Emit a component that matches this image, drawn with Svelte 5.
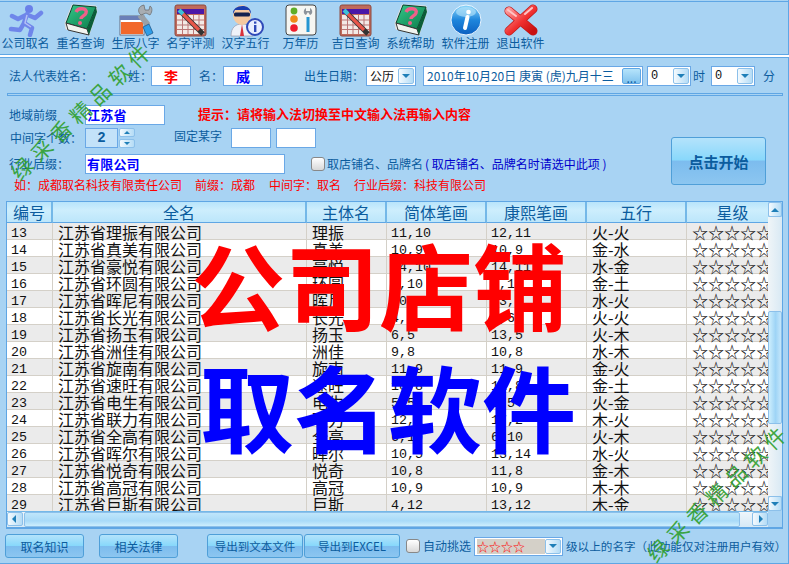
<script>
  const tools = [
    ['runner', '公司取名'], ['book', '重名查询'], ['tool', '生辰八字'], ['cal', '名字评测'], ['man', '汉字五行'],
    ['lights', '万年历'], ['cal', '吉日查询'], ['book', '系统帮助'], ['info', '软件注册'], ['close', '退出软件']
  ];
  const rows = [
    [13,'理振','11,10','12,11','火-火',6],[14,'真美','10,9','10,9','金-水',6],[15,'豪悦','14,10','14,11','水-金',6],
    [16,'环圆','8,10','8,13','金-土',6],[17,'晖尼','10,5','13,5','水-火',6],[18,'长光','4,6','8,6','火-火',5],
    [19,'扬玉','6,5','13,5','火-木',6],[20,'洲佳','9,8','10,8','水-木',6],[21,'旋南','11,9','11,9','金-火',5],
    [22,'速旺','10,8','11,8','金-土',5],[23,'电生','5,5','5,5','火-金',6],[24,'联力','12,2','17,2','木-火',6],
    [25,'全高','6,10','6,10','火-木',6],[26,'晖尔','10,5','13,14','水-火',6],[27,'悦奇','10,8','11,8','金-木',5],
    [28,'高冠','10,9','10,9','木-木',6],[29,'巨斯','4,12','13,12','木-金',6]
  ];
  const heads = ['编号','全名','主体名','简体笔画','康熙笔画','五行','星级'];
</script>

<svg class="defs" width="0" height="0" aria-hidden="true">
  <defs>
    <linearGradient id="gBall" x1="0" y1="0" x2="0" y2="1"><stop offset="0" stop-color="#8fd8fa"/><stop offset=".5" stop-color="#1e86dc"/><stop offset="1" stop-color="#0b5fc0"/></linearGradient>
    <linearGradient id="gX" x1="0" y1="0" x2="1" y2="1"><stop offset="0" stop-color="#ff9a9a"/><stop offset=".55" stop-color="#f03030"/><stop offset="1" stop-color="#c80f0f"/></linearGradient>
    <linearGradient id="gBook" x1="0" y1="0" x2="1" y2="1"><stop offset="0" stop-color="#35c98a"/><stop offset="1" stop-color="#0b7a4a"/></linearGradient>
    <symbol id="runner" viewBox="0 0 36 34">
      <circle cx="21" cy="6" r="4" fill="#6a80e8"/>
      <path d="M19 11 L16 20 L24 25 L22 32 M16 20 L12 27 L3 26 M18 12 L10 16 L4 13 M20 12 L27 15 L33 10" fill="none" stroke="#6f86ea" stroke-width="4.500" stroke-linecap="round" stroke-linejoin="round"/>
      <path d="M19 12 L17 20 L23 24" fill="none" stroke="#b4c0f6" stroke-width="1.500"/>
    </symbol>
    <symbol id="book" viewBox="0 0 36 34">
      <path d="M9 2 L33 3 L34 8 L26 32 L3 26 L2 20 Z" fill="#fff" stroke="#ddd" stroke-width="1"/>
      <path d="M10 2 L33 4 L24 26 L3 20 Z" fill="url(#gBook)" stroke="#0a3f2a" stroke-width="1"/>
      <path d="M3 20 L24 26 L26 32 L5 27 Z" fill="#f2f5f0" stroke="#333" stroke-width="1"/>
      <path d="M24 26 L33 4 L34 9 L26 32 Z" fill="#0a5c38"/>
      <path d="M13 9 C15 4 25 5 23 10 C22 13 18 13 18 16" fill="none" stroke="#f0608a" stroke-width="3.400"/>
      <circle cx="17" cy="20" r="2" fill="#f0608a"/>
    </symbol>
    <symbol id="tool" viewBox="0 0 36 34">
      <rect x="2" y="13" width="24" height="19" fill="#fff" stroke="#556" stroke-width=".8"/>
      <rect x="2" y="13" width="24" height="4" fill="#6a7fb8"/>
      <rect x="3" y="19" width="22" height="12" fill="#f2682a"/>
      <path d="M22 12 L30 22" stroke="#9aa0a6" stroke-width="6"/>
      <path d="M26 2 C20 3 19 9 23 12 L28 10 L32 12 C35 8 34 4 32 3 L31 7 L27 7 Z" fill="#a8adb2" stroke="#666" stroke-width=".7"/>
      <path d="M25 24 L31 21 L35 30 L29 33 Z" fill="#2f9ee8" stroke="#1a4f80" stroke-width=".7"/>
    </symbol>
    <symbol id="cal" viewBox="0 0 36 34">
      <rect x="2" y="2" width="31" height="31" rx="2" fill="#c06a5c" stroke="#8e4a3e" stroke-width="1"/>
      <rect x="4" y="6" width="27" height="5" fill="#4a18a8"/>
      <rect x="4" y="12" width="27" height="19" fill="#f3eae6"/>
      <path d="M4 17 H31 M4 22 H31 M4 26.500 H31 M9.500 12 V31 M15 12 V31 M20.500 12 V31 M26 12 V31" stroke="#b77" stroke-width="1"/>
      <path d="M8 9 L26 27 L30 31" stroke="#333" stroke-width="5"/>
      <path d="M8 9 L26 27" stroke="#e8564a" stroke-width="3.200"/>
      <path d="M6 7 L10 11" stroke="#3ec2d8" stroke-width="4"/>
    </symbol>
    <symbol id="man" viewBox="0 0 36 34">
      <path d="M3 33 C3 24 8 21 14 21 C21 21 25 24 25 33 Z" fill="#eef1f8" stroke="#99a" stroke-width=".7"/>
      <path d="M14 21 L12 33 L16 33 Z" fill="#d8323c"/>
      <ellipse cx="14" cy="12" rx="9" ry="10" fill="#f5c9a0"/>
      <path d="M5 11 C4 1 24 0 23 11 L21 7 H7 Z" fill="#1a3fb0"/>
      <rect x="6" y="9.500" width="16" height="4" rx="1.500" fill="#14224f"/>
      <circle cx="27" cy="24" r="8" fill="#e8eeff" stroke="#2f49b8" stroke-width="2"/>
      <rect x="26" y="22" width="2.400" height="7" fill="#2f49b8"/><rect x="26" y="18.500" width="2.400" height="2.200" fill="#2f49b8"/>
    </symbol>
    <symbol id="lights" viewBox="0 0 36 34">
      <rect x="3" y="2" width="30" height="30" rx="3" fill="#f6f6f2" stroke="#444" stroke-width="1"/>
      <circle cx="11" cy="8" r="3.400" fill="#5fae28"/><circle cx="11" cy="16" r="3.800" fill="#ef8a18"/><circle cx="11" cy="25" r="3.800" fill="#ee1c2c"/>
      <path d="M23 5 C20 7 20 11 23 12 L25 9 L27 12 C30 11 30 7 27 5 L27 8 H23 Z" fill="#8d949c"/>
      <rect x="23.500" y="14" width="3" height="15" fill="#2596d2"/>
    </symbol>
    <symbol id="info" viewBox="0 0 36 34">
      <circle cx="18" cy="17" r="15" fill="url(#gBall)" stroke="#e8f4ff" stroke-width="1"/>
      <ellipse cx="18" cy="9" rx="10" ry="5" fill="#bce8fc" opacity=".6"/>
      <path d="M19.500 14 L17 25" stroke="#fff" stroke-width="4" stroke-linecap="round"/>
      <circle cx="20.500" cy="9" r="2.300" fill="#fff"/>
    </symbol>
    <symbol id="close" viewBox="0 0 36 34">
      <path d="M6 8 L30 28 M30 6 L6 28" stroke="#c01818" stroke-width="9" stroke-linecap="round"/>
      <path d="M6 8 L30 28 M30 6 L6 28" stroke="url(#gX)" stroke-width="7.500" stroke-linecap="round"/>
      <path d="M5 7 L13 13 M29 5 L22 11" stroke="#ffc4c4" stroke-width="2" stroke-linecap="round"/>
    </symbol>
  </defs>
</svg>

<div class="window">
  <nav class="toolbar">
    {#each tools as [icon, label]}
      <div class="tool">
        <svg class="icon" viewBox="0 0 36 34"><use href="#{icon}" /></svg>
        <span>{label}</span>
      </div>
    {/each}
  </nav>
  <div class="sep"></div>

  <div class="row1">
    <span class="l-faren">法人代表姓名：</span>
    <span class="l-xing">姓：</span>
    <span class="box name red">李</span>
    <span class="l-ming">名：</span>
    <span class="box name blue">威</span>
    <span class="l-date">出生日期：</span>
    <span class="box cal-sel"><span>公历</span><i class="arrow"></i></span>
    <span class="box date"><span>2010年10月20日 庚寅 (虎)九月十三</span><b class="dots">...</b></span>
    <span class="box num-sel"><span>0</span><i class="arrow"></i></span>
    <span class="l-shi">时</span>
    <span class="box num-sel m-min"><span>0</span><i class="arrow"></i></span>
    <span class="l-fen">分</span>
  </div>
  <div class="band"></div>

  <div class="mid">
    <div class="fields">
      <div class="row r2">
        <span class="lab">地域前缀</span>
        <span class="box inp w80">江苏省</span>
        <span class="hint">提示：请将输入法切换至中文输入法再输入内容</span>
      </div>
      <div class="row r3">
        <span class="lab lab3">中间字个数：</span>
        <span class="box spin">2</span>
        <span class="spins"><i class="arrow up"></i><i class="arrow"></i></span>
        <span class="fixed">固定某字</span>
        <span class="box w40"></span>
        <span class="box w40 g5"></span>
      </div>
      <div class="row r4">
        <span class="lab">行业后缀：</span>
        <span class="box inp w200">有限公司</span>
        <i class="check c1"></i>
        <span class="shop">取店铺名、品牌名</span><span class="shop-note">( 取店铺名、品牌名时请选中此项 )</span>
      </div>
      <div class="example">
        <span>如：成都取名科技有限责任公司</span><span>前缀：成都</span><span>中间字：取名</span><span>行业后缀：科技有限公司</span>
      </div>
    </div>
    <button class="btn start">点击开始</button>
  </div>

  <div class="table">
    <div class="body">
      <div class="grid head">
        {#each heads as h}<div class="th">{h}</div>{/each}
      </div>
      {#each rows as r, i}
        <div class="grid tr" class:alt={i % 2 === 0}>
          <div class="td mono">{r[0]}</div>
          <div class="td">江苏省{r[1]}有限公司</div>
          <div class="td">{r[1]}</div>
          <div class="td mono">{r[2]}</div>
          <div class="td mono">{r[3]}</div>
          <div class="td">{r[4]}</div>
          <div class="td stars">{'☆'.repeat(r[5])}</div>
        </div>
      {/each}
      <div class="hbar">
        <i class="arrow left"></i>
        <div class="hthumb"></div>
        <i class="arrow right"></i>
      </div>
    </div>
    <div class="vbar">
      <i class="arrow up"></i>
      <div class="vtrack"><div class="vthumb"></div></div>
      <i class="arrow"></i>
    </div>
  </div>

  <div class="bottom">
    <button class="btn b78">取名知识</button>
    <button class="btn b78 g16">相关法律</button>
    <button class="btn b96 g28">导出到文本文件</button>
    <button class="btn b96 g2">导出到EXCEL</button>
    <i class="check c2"></i>
    <span class="auto">自动挑选</span>
    <span class="box combo"><span class="cval">☆☆☆☆</span><i class="arrow"></i></span>
    <span class="tail">级以上的名字（此功能仅对注册用户有效）</span>
  </div>

  <div class="big b1">公司店铺</div>
  <div class="big b2">取名软件</div>
  <div class="wm w1">绿采香精品软件</div>
  <div class="wm w2">绿采香精品软件</div>
</div>

<style>
  :global(body) { margin: 0; background: #a8d3f3; }
  .defs { position: absolute; }
  .window {
    position: relative; width: 789px; height: 564px; box-sizing: border-box; overflow: hidden;
    padding-top: 1px; background: #a8d3f3; color: #0b5c9e;
    font: 12px/16px "Noto Sans CJK SC", sans-serif;
    box-shadow: inset 0 -2px 0 -1px #5fa6e4, inset -1px 0 0 #5fa6e4;
  }
  span, div { white-space: nowrap; }
  i { display: block; }

  .toolbar { display: flex; height: 54px; box-sizing: border-box; border-top: 1px solid #5fa6e4; border-bottom: 1px solid #5fa6e4; padding-top: 1px; margin-left: -2px; }
  .tool { width: 55px; display: flex; flex-direction: column; align-items: center; }
  .tool .icon { width: 36px; height: 34px; display: block; }
  .tool span { font-size: 12px; line-height: 14px; margin-top: -1px; }
  .sep { height: 2px; background: #fff; border-bottom: 1px solid #5fa6e4; }

  .box { display: flex; align-items: center; box-sizing: border-box; background: #fff; border: 1px solid #6aa8e6; height: 20px; flex: none; color: #111; }
  .row1 { display: flex; align-items: center; height: 20px; margin-top: 8px; }
  .l-faren { margin-left: 9px; width: 119px; }
  .l-xing { width: 23px; }
  .name { width: 40px; justify-content: center; font-weight: 700; font-size: 14px; }
  .red { color: #f00; }
  .blue { color: #00f; }
  .l-ming { margin-left: 8px; width: 24px; }
  .l-date { margin-left: 41px; width: 62px; }
  .cal-sel { width: 50px; padding-left: 3px; justify-content: space-between; }
  .date { width: 220px; margin-left: 7px; padding-left: 3px; justify-content: space-between; color: #0b5c9e; }
  .dots { width: 19px; height: 16px; margin-right: 1px; border: 1px solid #5fa6e4; box-sizing: border-box; background: linear-gradient(#b6e4fb, #7fc2ee); border-radius: 2px; text-align: center; font: 12px/18px "Noto Sans CJK SC", sans-serif; }
  .num-sel { width: 44px; margin-left: 4px; padding-left: 3px; justify-content: space-between; font-family: "Liberation Mono", monospace; }
  .m-min { margin-left: 6px; }
  .l-shi { margin-left: 2px; width: 12px; }
  .l-fen { margin-left: 8px; }
  .arrow { width: 16px; height: 16px; flex: none; box-sizing: border-box; margin-right: 1px; position: relative; border: 1px solid #8cc0ea; border-radius: 2px; background: linear-gradient(90deg, #f4fafe, #b4dcf6); }
  .arrow::after { content: ""; position: absolute; left: 50%; top: 50%; margin: -2px 0 0 -4px; border: 4px solid transparent; border-bottom: 0; border-top: 4px solid #1f7fb8; }
  .arrow.up::after { border-top: 0; border-bottom: 4px solid #1f7fb8; }
  .arrow.left::after { margin: -4px 0 0 -3px; border: 4px solid transparent; border-left: 0; border-right: 4px solid #1f7fb8; }
  .arrow.right::after { margin: -4px 0 0 -1px; border: 4px solid transparent; border-right: 0; border-left: 4px solid #1f7fb8; }

  .band { height: 3px; box-sizing: border-box; margin: 7px 6px 0 7px; background: #a8d3f3; border: 1px solid #5fa6e4; }

  .mid { display: flex; padding-top: 9px; height: 105px; box-sizing: border-box; }
  .fields { width: 671px; flex: none; }
  .start { width: 95px; height: 48px; margin-top: 32px; font-size: 15px; font-weight: 700; }
  .row { display: flex; align-items: center; height: 20px; }
  .r3 { margin-top: 3px; }
  .r4 { margin-top: 6px; }
  .lab { width: 76px; margin-left: 9px; flex: none; }
  .lab3 { margin-left: 10px; width: 75px; }
  .inp { color: #00f; font-weight: 700; font-size: 13px; padding-left: 1px; letter-spacing: .2px; }
  .w80 { width: 80px; }
  .w200 { width: 200px; }
  .w40 { width: 40px; }
  .g5 { margin-left: 5px; }
  .hint { color: #f00; font-weight: 700; font-size: 13px; margin-left: 33px; margin-top: -3px; }
  .spin { width: 33px; justify-content: center; background: #c3e2f9; color: #0b5c9e; font: 700 14px "Liberation Mono", monospace; }
  .spins { margin-left: 1px; width: 17px; }
  .spins .arrow { height: 9px; }
  .spins .arrow + .arrow { margin-top: 2px; }
  .spins .arrow::after { border-width: 3px; margin: -1.500px 0 0 -3px; }
  .fixed { margin-left: 38px; width: 57px; margin-top: -4px; }
  .check { box-sizing: border-box; width: 14px; height: 14px; border: 1px solid #888; border-radius: 3px; background: linear-gradient(#fff, #d8d8d8); flex: none; }
  .c1 { margin-left: 26px; }
  .shop { margin-left: 2px; }
  .shop-note { color: #00c; margin-left: 2px; }
  .example { display: flex; color: #f00; margin: 3px 0 0 14px; height: 16px; line-height: 16px; }
  .example span:nth-child(2) { margin-left: 13px; }
  .example span:nth-child(3) { margin-left: 14px; }
  .example span:nth-child(4) { margin-left: 13px; }

  .btn { box-sizing: border-box; border: 1px solid #4f9fd8; border-radius: 3px; color: #0b5c9e; font-family: "Noto Sans CJK SC", sans-serif; padding: 0; background: linear-gradient(#b4e3fb 0, #88d8fb 48%, #7cbcee 50%, #8cc6f0 100%); flex: none; }

  .table { display: flex; width: 777px; height: 328px; margin: 0 0 0 6px; box-sizing: border-box; border: 1px solid #5fa6e4; border-bottom-width: 2px; overflow: hidden; }
  .body { width: 761px; flex: none; overflow: hidden; }
  .grid { display: grid; grid-template-columns: 46px 254px 80px 100px 100px 100px 81px; }
  .head { height: 21px; background: #fff; }
  .th { box-sizing: border-box; height: 21px; text-align: center; font-size: 16px; line-height: 20px; color: #0b5c9e; background: linear-gradient(#b8e4fb, #cdeefd 40%, #bce6fb); border-right: 2px solid #74b8e8; border-bottom: 1px solid #5fa6e4; }
  .th:last-child { padding-left: 10px; border-right: 0; }
  .tr { height: 17px; background: #fff; }
  .tr.alt { background: #ebebeb; }
  .td { box-sizing: border-box; height: 17px; padding-left: 5px; font-size: 16px; line-height: 18px; color: #111; border-right: 1px solid #d4d0c8; border-bottom: 1px solid #d4d0c8; }
  .mono { font: 13.330px/21px "Liberation Mono", monospace; padding-left: 4px; }
  .stars { border-right: 0; }
  .hbar { display: flex; position: relative; height: 16px; background: linear-gradient(#eef6fb, #d6e9f6); border-top: 1px solid #74b8e8; box-sizing: border-box; margin-top: -1px; }
  .hbar .arrow { height: 14px; margin: 0; }
  .hthumb { width: 716px; background: linear-gradient(#bfe6fb, #a8daf8 60%, #cdeefd); border-radius: 2px; border: 1px solid #8cc0ea; box-sizing: border-box; margin-left: 1px; }
  .hbar .right { margin-left: 12px; }
  .vbar { width: 14px; display: flex; flex-direction: column; background: #a8d3f3; flex: none; }
  .vbar > .arrow { width: 14px; height: 15px; margin: 0; }
  .vtrack { height: 279px; background: linear-gradient(90deg, #f0f5f8, #d8e9f4); padding-top: 94px; box-sizing: border-box; }
  .vthumb { height: 113px; border: 1px solid #8cc0ea; box-sizing: border-box; border-radius: 2px; background: linear-gradient(90deg, #cdeefd, #9ed4f6 55%, #c4e6fb); }

  .bottom { display: flex; align-items: center; height: 24px; margin: 5px 0 0 5px; }
  .b78 { width: 79px; height: 24px; font-size: 12px; }
  .b96 { width: 96px; height: 24px; font-size: 11.500px; }
  .g16 { margin-left: 15px; }
  .g28 { margin-left: 29px; }
  .g2 { margin-left: 1px; }
  .c2 { margin-left: 6px; }
  .auto { margin-left: 3px; width: 51px; }
  .combo { width: 89px; height: 19px; padding: 1px 0 1px 2px; justify-content: space-between; }
  .cval { background: #d4d0c8; color: #f00; width: 69px; height: 15px; font-size: 12px; line-height: 15px; }
  .combo .arrow { height: 15px; }
  .tail { margin-left: 3px; font-size: 11.600px; }

  .big { position: absolute; font-weight: 700; font-size: 94px; line-height: 94px; }
  .b1 { left: 191px; top: 236px; color: #f00; }
  .b2 { left: 200px; top: 358px; color: #00f; }
  .wm { position: absolute; width: 190px; text-align: center; font-size: 21px; line-height: 26px; letter-spacing: 6px; color: #2f9f2f; opacity: .9; font-weight: 400; transform: translate(-50%, -50%) rotate(-44deg); }
  .w1 { left: 82px; top: 110px; }
  .w2 { left: 718px; top: 492px; }
</style>
